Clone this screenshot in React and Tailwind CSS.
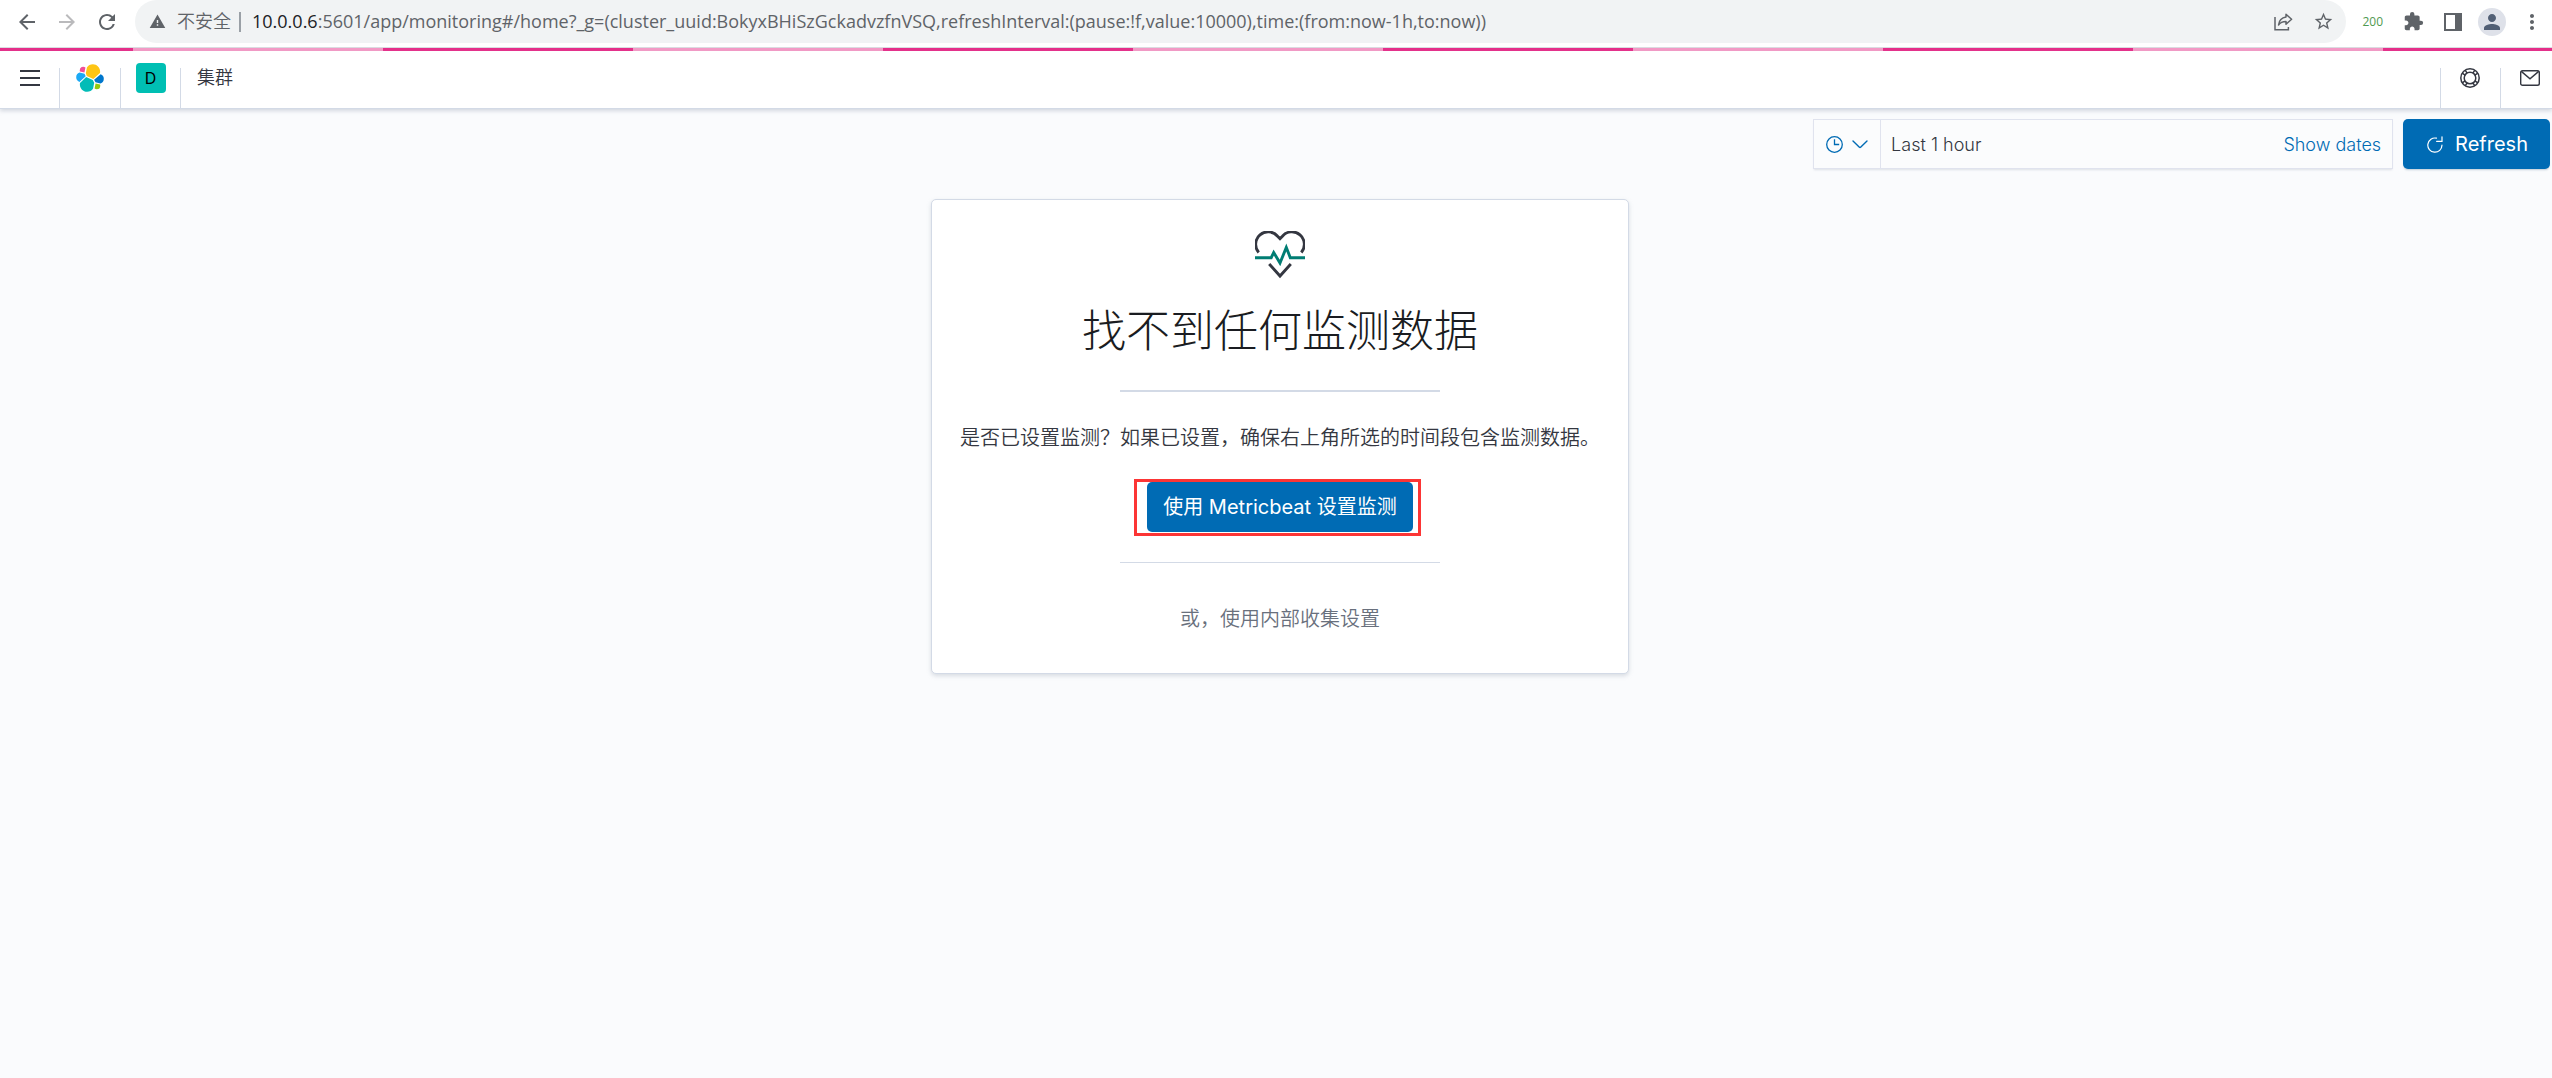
import React from "react";
import {
  MdArrowBack,
  MdArrowForward,
  MdRefresh,
  MdWarning,
  MdStarBorder,
  MdExtension,
  MdPerson,
  MdMoreVert,
} from "react-icons/md";

function ShareIcon() {
  return (
    <svg width="19" height="18" viewBox="0 0 19 18" fill="none" stroke="#5f6368" strokeWidth="1.5" aria-hidden="true">
      <path d="M1 4v12.8h13.4V14" />
      <path d="M12 1.2l5.6 5-5.6 5V8.400c-3.400 0-5.700.9-7.500 3.600.6-4.300 3.200-7.300 7.500-7.900z" strokeLinejoin="round" />
    </svg>
  );
}

function SidePanelIcon() {
  return (
    <svg width="18" height="18" viewBox="0 0 18 18" aria-hidden="true">
      <path fill="#5f6368" fillRule="evenodd" d="M0 0h18v18H0zM2 2v14h9V2z" />
    </svg>
  );
}

function ElasticLogo() {
  return (
    <svg width="30" height="30" viewBox="0 0 32 32" aria-hidden="true">
      <path fill="#FEC514" d="M12.58 13.787l7.002 3.211 7.066-6.213a7.849 7.849 0 00.152-1.557c0-4.287-3.464-7.775-7.721-7.775a7.716 7.716 0 00-6.36 3.356l-1.176 6.123 1.037 2.855z" />
      <path fill="#02BCB7" d="M5.333 21.228A7.964 7.964 0 005.18 22.8c0 4.3 3.473 7.798 7.741 7.798a7.732 7.732 0 006.4-3.404l1.166-6.102-1.556-2.987-7.03-3.216-6.568 6.34z" />
      <path fill="#F04E98" d="M5.288 9.067l4.8 1.137L11.14 4.73a3.785 3.785 0 00-6.088 3.028c0 .452.079.897.236 1.31z" />
      <path fill="#1BA9F5" d="M4.872 10.214a5.294 5.294 0 00-3.595 5.015 5.262 5.262 0 003.395 4.922l6.735-6.114-1.237-2.654-5.298-1.169z" />
      <path fill="#93C90E" d="M20.873 27.186a3.724 3.724 0 002.285.785 3.789 3.789 0 003.788-3.789c0-.46-.081-.905-.236-1.31l-4.797-1.126-1.04 5.44z" />
      <path fill="#0077CC" d="M21.848 20.563l5.28 1.238a5.293 5.293 0 003.595-5.015 5.263 5.263 0 00-3.4-4.916l-6.905 6.075 1.43 2.618z" />
    </svg>
  );
}

function MenuIcon() {
  return (
    <svg width="20" height="16" viewBox="0 0 20 16" aria-hidden="true">
      <path fill="#343741" d="M0 0h20v2H0zM0 7h20v2H0zM0 14h20v2H0z" />
    </svg>
  );
}

function HelpIcon() {
  return (
    <svg width="20" height="20" viewBox="0 0 20 20" fill="none" stroke="#343741" strokeWidth="1.500" aria-hidden="true">
      <circle cx="10" cy="10" r="9.200" />
      <circle cx="10" cy="10" r="5.800" />
      <path d="M5.200 2.200l1.900 2.900M5.100 7.100L2.200 5.200M14.800 2.200l-1.900 2.900M14.900 7.100l2.900-1.900M5.200 17.800l1.900-2.900M5.100 12.900l-2.900 1.900M14.800 17.800l-1.900-2.900M14.900 12.900l2.900 1.900" />
    </svg>
  );
}

function MailIcon() {
  return (
    <svg width="20" height="16" viewBox="0 0 20 16" fill="none" stroke="#343741" strokeWidth="1.4" aria-hidden="true">
      <rect x=".7" y=".7" width="18.600" height="14.600" rx="1.800" />
      <path d="M1.300 1.400L10 8.900l8.700-7.500" />
    </svg>
  );
}

function ClockIcon() {
  return (
    <svg width="17" height="17" viewBox="0 0 17 17" fill="none" stroke="#006bb4" strokeWidth="1.3" aria-hidden="true">
      <circle cx="8.500" cy="8.500" r="7.800" />
      <path d="M8.500 3.200v5.300h4.700" />
    </svg>
  );
}

function ChevronIcon() {
  return (
    <svg width="16" height="9" viewBox="0 0 16 9" fill="none" stroke="#006bb4" strokeWidth="1.4" strokeLinecap="round" aria-hidden="true">
      <path d="M1 1l6.400 6.300a.9.9 0 001.200 0L15 1" />
    </svg>
  );
}

function ReloadIcon() {
  return (
    <svg width="16" height="17" viewBox="0 0 16 17" fill="none" stroke="#fff" strokeWidth="1.200" strokeLinecap="round" aria-hidden="true">
      <path d="M9.500 2.200A7.100 7.100 0 1 0 15 9.100" />
      <path d="M15 .8v4.500H9.600" />
    </svg>
  );
}

function HeartbeatIcon() {
  return (
    <svg width="50" height="48" viewBox="0 0 50 48" fill="none" strokeWidth="2.900" aria-hidden="true">
      <path stroke="#343741" d="M3.700 21.500A12.300 12.300 0 0 1 22.600 5.200L25 7.700l2.400-2.500A12.300 12.300 0 0 1 46.300 21.500" />
      <path stroke="#017d73" d="M0 26.700h16.200l2.500-5.200 6.300 10.500 6.300-15.500 4 10.200H50" />
      <path stroke="#343741" d="M14.200 33L25 45l10.800-12" />
    </svg>
  );
}

function BrowserBar() {
  return (
    <div className="flex h-12 items-start border-b border-[#dadce0] bg-white pr-2 font-['Open_Sans','Noto_Sans_CJK_SC',sans-serif] text-[#5f6368]">
      <div className="flex h-[43px] w-[135px] shrink-0 items-center gap-4 pl-[15px]">
        <button aria-label="Back"><MdArrowBack size={24} /></button>
        <button aria-label="Forward" className="text-[#bababc]"><MdArrowForward size={24} /></button>
        <button aria-label="Reload"><MdRefresh size={24} /></button>
      </div>
      <div className="flex h-[43px] min-w-0 grow items-center rounded-full bg-[#f1f3f4] pr-3 pl-[14px]">
        <MdWarning size={17} className="shrink-0" />
        <span className="ml-[11px] shrink-0 text-[18px] font-[350]">不安全</span>
        <span className="mx-2 h-5 w-[2px] shrink-0 bg-[#9aa0a6]" />
        <div role="textbox" aria-label="Address" className="ml-[3px] grow truncate text-[18px] font-[370] text-[#5f6368]">
          <span className="text-[#202124]">10.0.0.6</span>
          :5601/app/monitoring#/home?_g=(cluster_uuid:BokyxBHiSzGckadvzfnVSQ,refreshInterval:(pause:!f,value:10000),time:(from:now-1h,to:now))
        </div>
        <button aria-label="Share" className="shrink-0"><ShareIcon /></button>
        <button aria-label="Bookmark" className="ml-5 shrink-0"><MdStarBorder size={21} /></button>
      </div>
      <div className="flex h-[43px] shrink-0 items-center pl-4">
        <button className="text-[12px] text-[#4f9a50]">200</button>
        <button aria-label="Extensions" className="ml-5"><MdExtension size={21} /></button>
        <button aria-label="Side panel" className="ml-5"><SidePanelIcon /></button>
        <button aria-label="Profile" className="ml-4 flex size-7 items-center justify-center rounded-full bg-[#dee1e9] text-[#515f75]">
          <MdPerson size={24} />
        </button>
        <button aria-label="More" className="ml-[14px]"><MdMoreVert size={24} /></button>
      </div>
    </div>
  );
}

function KibanaHeader() {
  return (
    <header className="relative flex h-[58px] items-end border-b border-[#d3dae6] bg-white shadow-[0_2px_4px_rgba(152,162,179,0.4)]">
      <button aria-label="Menu" className="flex h-10 w-[60px] items-start justify-center border-r border-[#d3dae6] pt-[2px] pl-px">
        <MenuIcon />
      </button>
      <a href="#home" aria-label="Elastic" className="flex h-10 w-[61px] justify-center border-r border-[#d3dae6]">
        <span className="-mt-[5px]"><ElasticLogo /></span>
      </a>
      <button aria-label="Space" className="flex h-10 w-[60px] justify-center border-r border-[#d3dae6]">
        <span className="-mt-[5px] flex size-[30px] items-center justify-center rounded bg-[#00bfb3] text-[16px] text-black">D</span>
      </button>
      <nav className="h-10 grow pl-4 text-[18px] leading-5 font-[350]">集群</nav>
      <button aria-label="Help" className="flex h-10 w-[60px] border-l border-[#d3dae6] pl-[19px]">
        <HelpIcon />
      </button>
      <button aria-label="Newsfeed" className="flex h-10 w-[52px] border-l border-[#d3dae6] pt-[2px] pl-[19px]">
        <MailIcon />
      </button>
    </header>
  );
}

function TimeBar() {
  return (
    <div className="flex justify-end gap-[10px] pt-[10px] pr-[2px]">
      <div className="flex h-[50px] w-[580px] items-stretch border border-[#e0e3ee] bg-[#fbfcfd] text-[18px] font-[350] shadow-[0_2px_2px_-1px_rgba(152,162,179,0.3)]">
        <button aria-label="Quick select" className="flex w-[67px] items-center gap-[9px] border-r border-[#e0e3ee] pl-3">
          <ClockIcon />
          <ChevronIcon />
        </button>
        <button className="grow pl-[10px] text-left">Last 1 hour</button>
        <button className="pr-[11px] text-[#006bb4]">Show dates</button>
      </div>
      <button className="flex h-[50px] items-center gap-3 rounded-[5px] bg-[#006bb4] pr-[22px] pl-6 text-[20px] text-white shadow-[0_2px_2px_-1px_rgba(54,97,126,0.3)]">
        <ReloadIcon />
        Refresh
      </button>
    </div>
  );
}

function NoDataPanel() {
  return (
    <section className="mx-auto mt-[30px] flex flex-col items-center rounded-[5px] border border-[#d3dae6] bg-white px-7 pt-[31px] pb-[39px] text-[20px] shadow-[0_2px_4px_rgba(152,162,179,0.35)]">
      <HeartbeatIcon />
      <h1 className="mt-[22px] text-[44px] leading-[60px] font-light text-[#1a1c21]">找不到任何监测数据</h1>
      <hr className="mt-[29px] w-1/2 border-0 border-t-2 border-[#d3dae6]" />
      <p className="mt-[31px] leading-[30px] font-[350]">
        是否已设置监测？如果已设置，确保右上角所选的时间段包含监测数据。
      </p>
      <div className="mt-[26px] mr-[5px] flex border-[3px] border-[#fc3535] pr-[5px] pl-[10px] pb-px">
        <button className="h-[50px] rounded-[5px] bg-[#006bb4] px-4 text-white">使用 Metricbeat 设置监测</button>
      </div>
      <hr className="mt-[26px] w-1/2 border-[#d3dae6]" />
      <button className="mt-[41px] leading-[30px] font-[350] text-[#69707d]">或，使用内部收集设置</button>
    </section>
  );
}

export default function App() {
  return (
    <div className="flex min-h-screen flex-col bg-[#fafbfd] font-['Inter','Noto_Sans_CJK_SC',sans-serif] text-[#343741]">
      <BrowserBar />
      <div className="h-[3px] bg-[linear-gradient(90deg,#f49ac6_250px,#e62d89_250px)] bg-[length:500px_3px] bg-[position:133px_0]" />
      <KibanaHeader />
      <main className="flex flex-col">
        <TimeBar />
        <div className="flex pl-2">
          <NoDataPanel />
        </div>
      </main>
    </div>
  );
}
